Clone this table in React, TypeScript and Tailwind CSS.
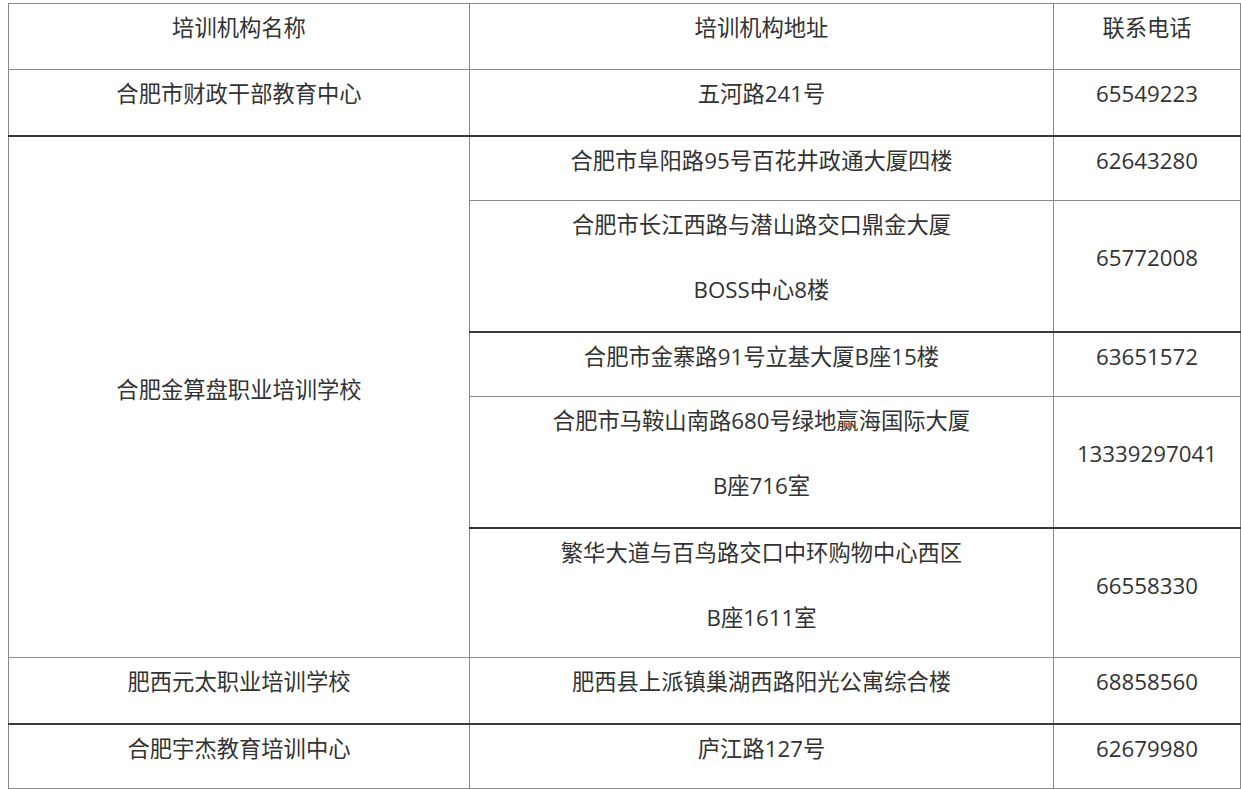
import React from "react";

const grey = "border border-[#898989]";

function Lines({ lines, dark }: { lines: string[]; dark?: boolean }) {
  return (
    <>
      {lines.map((l, i) => (
        <p
          key={l}
          className={`leading-[48px] ${dark && i === lines.length - 1 ? "pb-[15px]" : "pb-[17px]"}`}
        >
          {l}
        </p>
      ))}
    </>
  );
}

function Cell({
  lines,
  dark,
  rowSpan,
}: {
  lines: string[];
  dark?: boolean;
  rowSpan?: number;
}) {
  return (
    <td
      rowSpan={rowSpan}
      className={`${grey} p-0 text-center align-middle ${dark ? "border-t-2 border-t-[#3a3a3a]" : ""}`}
    >
      <Lines lines={lines} dark={dark} />
    </td>
  );
}

export default function App() {
  return (
    <div className="bg-white min-h-[789px] pt-[3px] pl-[8px] text-[22.3px] text-[#333333] font-['Open_Sans','Noto_Sans_CJK_SC',sans-serif]">
      <table className="border-collapse table-fixed w-[1232px]">
        <colgroup>
          <col className="w-[461px]" />
          <col className="w-[584px]" />
          <col className="w-[187px]" />
        </colgroup>
        <tbody>
          <tr>
            <Cell lines={["培训机构名称"]} />
            <Cell lines={["培训机构地址"]} />
            <Cell lines={["联系电话"]} />
          </tr>
          <tr>
            <Cell lines={["合肥市财政干部教育中心"]} />
            <Cell lines={["五河路241号"]} />
            <Cell lines={["65549223"]} />
          </tr>
          <tr>
            <Cell dark rowSpan={5} lines={["合肥金算盘职业培训学校"]} />
            <Cell dark lines={["合肥市阜阳路95号百花井政通大厦四楼"]} />
            <Cell dark lines={["62643280"]} />
          </tr>
          <tr>
            <Cell lines={["合肥市长江西路与潜山路交口鼎金大厦", "BOSS中心8楼"]} />
            <Cell lines={["65772008"]} />
          </tr>
          <tr>
            <Cell dark lines={["合肥市金寨路91号立基大厦B座15楼"]} />
            <Cell dark lines={["63651572"]} />
          </tr>
          <tr>
            <Cell lines={["合肥市马鞍山南路680号绿地赢海国际大厦", "B座716室"]} />
            <Cell lines={["13339297041"]} />
          </tr>
          <tr>
            <Cell dark lines={["繁华大道与百鸟路交口中环购物中心西区", "B座1611室"]} />
            <Cell dark lines={["66558330"]} />
          </tr>
          <tr>
            <Cell lines={["肥西元太职业培训学校"]} />
            <Cell lines={["肥西县上派镇巢湖西路阳光公寓综合楼"]} />
            <Cell lines={["68858560"]} />
          </tr>
          <tr>
            <Cell dark lines={["合肥宇杰教育培训中心"]} />
            <Cell dark lines={["庐江路127号"]} />
            <Cell dark lines={["62679980"]} />
          </tr>
        </tbody>
      </table>
    </div>
  );
}
